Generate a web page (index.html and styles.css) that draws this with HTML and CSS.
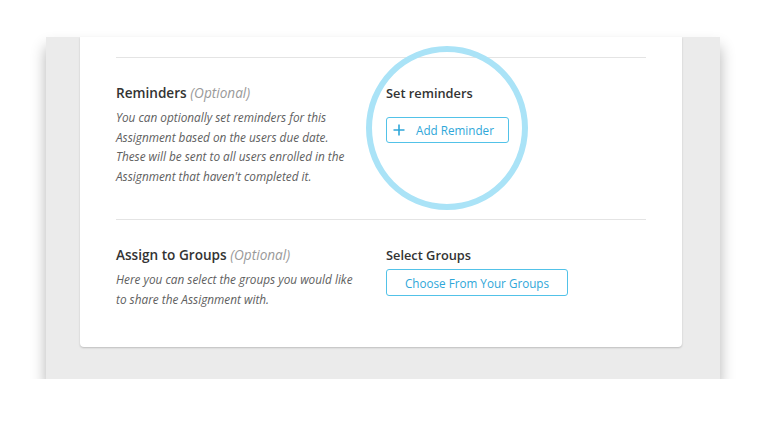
FILE: index.html
```html
<!DOCTYPE html>
<html>
<head>
<meta charset="utf-8">
<link rel="stylesheet" href="styles.css">
</head>
<body>
<div class="panel">
  <div class="card">
    <div class="content">
      <div class="rule"></div>
      <div class="section">
        <div class="col-left">
          <h3 class="title title-left">Reminders <span class="opt">(Optional)</span></h3>
          <p class="desc">You can optionally set reminders for this Assignment based on the users due date. These will be sent to all users enrolled in the Assignment that haven't completed it.</p>
        </div>
        <div class="col-right">
          <h3 class="title">Set reminders</h3>
          <button class="btn btn-add"><svg class="plus" width="12" height="12" viewBox="0 0 12 12"><path d="M6 0.5V11.5M0.5 6H11.5" stroke="#2fa7d9" stroke-width="1.6" fill="none"/></svg>Add Reminder</button>
          <div class="ring"></div>
        </div>
      </div>
      <div class="rule"></div>
      <div class="section">
        <div class="col-left">
          <h3 class="title title-left">Assign to Groups <span class="opt">(Optional)</span></h3>
          <p class="desc">Here you can select the groups you would like to share the Assignment with.</p>
        </div>
        <div class="col-right">
          <h3 class="title">Select Groups</h3>
          <button class="btn btn-groups">Choose From Your Groups</button>
        </div>
      </div>
    </div>
  </div>
</div>
</body>
</html>
```
FILE: styles.css
```css
html, body {
  margin: 0;
  padding: 0;
  background: #ffffff;
  font-family: "Open Sans", "Noto Sans", sans-serif;
}
.panel {
  margin: 37px 0 0 46px;
  width: 674px;
  height: 342px;
  background: #ebebeb;
  box-shadow: 0 10px 14px rgba(0, 0, 0, 0.3);
}
.card {
  margin-left: 34px;
  width: 602px;
  height: 310px;
  background: #ffffff;
  border-radius: 0 0 4px 4px;
  box-shadow: 0 1px 2px rgba(0, 0, 0, 0.2);
}
.content {
  padding: 20px 36px 0 36px;
}
.rule {
  height: 1px;
  background: #e4e4e4;
}
.section {
  display: flex;
  padding: 26px 0 33px 0;
}
.col-left {
  width: 270px;
}
.col-right {
  position: relative;
  display: flex;
  flex-direction: column;
  align-items: flex-start;
}
.title {
  margin: 0;
  font-size: 12.8px;
  line-height: 18px;
  font-weight: 600;
  color: #333333;
}
.title-left {
  font-size: 13.6px;
}
.opt {
  font-weight: 400;
  font-style: italic;
  color: #9a9a9a;
}
.desc {
  margin: 6px 0 0 0;
  font-size: 11.8px;
  line-height: 19.6px;
  font-style: italic;
  color: #606060;
  width: 242px;
}
.btn {
  margin-top: 15px;
  height: 26px;
  border: 1.5px solid #52c2e8;
  border-radius: 3px;
  background: #ffffff;
  color: #2fa7d9;
  font-family: "Open Sans", "Noto Sans", sans-serif;
  font-size: 11.7px;
  padding: 0;
  display: flex;
  align-items: center;
  justify-content: center;
}
.btn-add {
  width: 123px;
  justify-content: flex-start;
  padding-left: 6px;
}
.btn-groups {
  width: 182px;
  height: 27px;
  margin-top: 5px;
}
.plus {
  margin-right: 11px;
  flex: none;
}
.ring {
  position: absolute;
  left: -20px;
  top: -38px;
  width: 150px;
  height: 152px;
  border: 6px solid #aae3f7;
  border-radius: 50%;
}
```
